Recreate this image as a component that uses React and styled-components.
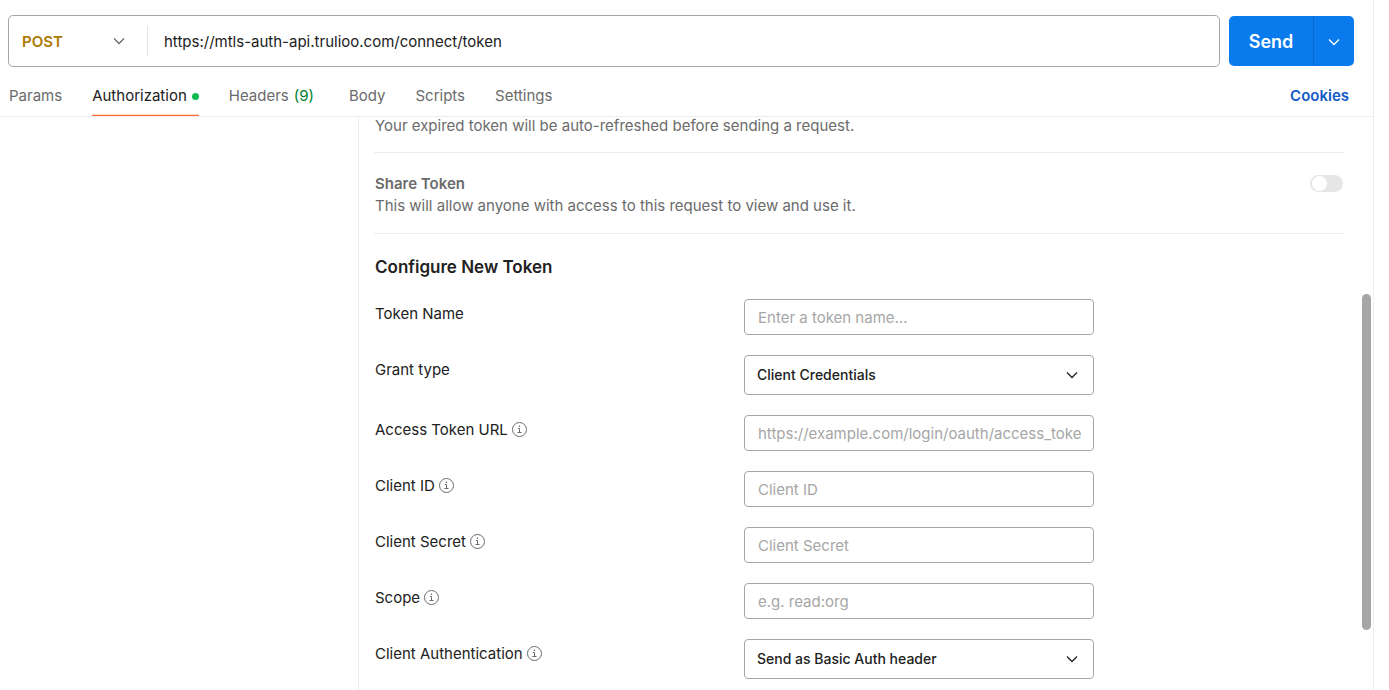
import React from 'react';
import styled, { createGlobalStyle } from 'styled-components';

const GlobalStyle = createGlobalStyle`
  * { box-sizing: border-box; }
  html, body { margin: 0; background: #ffffff; }
  body, button, input, select {
    font-family: Inter, "Liberation Sans", sans-serif;
    font-size: 15px;
    line-height: 22px;
    color: #212121;
  }
  html { overflow: hidden; }
`;

const Page = styled.div`
  display: flex;
  flex-direction: column;
  height: 100vh;
  margin-right: 15px;
  border-right: 1px solid #ededed;
`;

const RequestBar = styled.form`
  display: flex;
  align-items: center;
  gap: 9px;
  padding: 15px 19px 0 8px;
`;

const UrlGroup = styled.div`
  flex: 1;
  display: flex;
  align-items: center;
  height: 52px;
  border: 1px solid #a6a6a6;
  border-radius: 5px;
`;

const SelectWrap = styled.div`
  position: relative;
  width: ${(p) => p.$width};
`;

const SelectIcon = styled.span`
  position: absolute;
  top: 0;
  bottom: 0;
  right: ${(p) => p.$right};
  display: flex;
  align-items: center;
  pointer-events: none;
  color: ${(p) => p.$color};
`;

const MethodSelect = styled.select`
  appearance: none;
  width: 100%;
  height: 30px;
  padding: 1px 13px 0;
  border: 0;
  border-right: 1px solid #e6e6e6;
  background: transparent;
  color: #ad7a03;
  font-weight: 600;
`;

const UrlInput = styled.input`
  flex: 1;
  min-width: 0;
  height: 48px;
  padding: 0 16px;
  border: 0;
  background: transparent;
  outline: 0;
`;

const SendGroup = styled.div`
  display: flex;
  height: 50px;
  border-radius: 5px;
  overflow: hidden;
`;

const SendButton = styled.button`
  display: flex;
  align-items: center;
  justify-content: center;
  width: ${(p) => p.$width};
  padding: 1px 0 0;
  border: 0;
  border-left: ${(p) => (p.$divided ? '1px solid #0a6bd6' : '0')};
  background: #097bed;
  color: #ffffff;
  font-size: 18px;
  font-weight: 600;
`;

const TabBar = styled.nav`
  display: flex;
  align-items: stretch;
  gap: 30px;
  height: 50px;
  padding: 0 24px 0 9px;
  border-bottom: 1px solid #ededed;
`;

const Tab = styled.button`
  display: flex;
  align-items: center;
  padding: 10px 0 0;
  height: 49px;
  border: 0;
  border-bottom: 1px solid ${(p) => (p.$active ? '#ff6c37' : 'transparent')};
  box-shadow: ${(p) => (p.$active ? 'inset 0 -1px #ffd9cc' : 'none')};
  background: transparent;
  color: ${(p) => (p.$active ? '#212121' : '#6b6b6b')};
`;

const ActiveDot = styled.span`
  width: 7px;
  height: 7px;
  margin-left: 5px;
  border-radius: 50%;
  background: #0cbb52;
`;

const Count = styled.span`
  margin: 0 5px;
  color: #007f31;
`;

const CookiesLink = styled.a`
  margin-left: auto;
  padding-top: 18px;
  color: #1259c7;
  font-weight: 600;
  text-decoration: none;
`;

const Body = styled.div`
  position: relative;
  flex: 1;
  min-height: 0;
  display: flex;
  overflow: hidden;
`;

const Sidebar = styled.aside`
  flex: 0 0 359px;
  border-right: 1px solid #ededed;
`;

const Content = styled.main`
  flex: 1;
  min-width: 0;
  padding: 0 29px 0 15px;
`;

const Section = styled.section`
  display: flex;
  justify-content: space-between;
  padding: ${(p) => p.$padding};
  border-bottom: 1px solid #ededed;
  color: #6b6b6b;
`;

const Text = styled.p`
  margin: 0;
  line-height: ${(p) => (p.$tight ? '18px' : '22px')};
`;

const SectionLabel = styled.label`
  display: block;
  font-weight: 600;
`;

const Toggle = styled.input`
  appearance: none;
  width: 33px;
  height: 17px;
  margin: 2px 0 0;
  padding: 1px 2px;
  border-radius: 9px;
  background: #e6e6e6;
  &::before {
    content: '';
    display: block;
    width: 15px;
    height: 15px;
    border-radius: 50%;
    background: #ffffff;
  }
`;

const Form = styled.form`
  display: flex;
  flex-direction: column;
  gap: 20px;
  padding-left: 1px;
`;

const Heading = styled.h2`
  margin: 20px 1px 19px;
  font-size: 17px;
  line-height: 26px;
  font-weight: 600;
`;

const Row = styled.div`
  display: flex;
  align-items: flex-start;
`;

const LabelCell = styled.div`
  display: flex;
  align-items: center;
  gap: 4px;
  flex: 0 0 369px;
  padding-top: 4px;
`;

const TextField = styled.input`
  width: 350px;
  height: 36px;
  padding: 0 12px 0 13px;
  border: 1px solid #a6a6a6;
  border-radius: 4px;
  background: #ffffff;
  &::placeholder { color: #a6a6a6; opacity: 1; }
`;

const SelectField = styled.select`
  appearance: none;
  display: block;
  width: 100%;
  height: 40px;
  padding: 0 12px;
  border: 1px solid #a6a6a6;
  border-radius: 4px;
  background: #ffffff;
  font-size: 14px;
  font-weight: 500;
`;

const ScrollRail = styled.div`
  position: absolute;
  top: 0;
  right: 2px;
  bottom: 0;
  width: 9px;
`;

const ScrollThumb = styled.div`
  height: 336px;
  margin-top: 177px;
  border-radius: 5px;
  background: #a6a6a6;
`;

const Chevron = () => (
  <svg width="12" height="8" viewBox="0 0 12 8" fill="none" stroke="currentColor" strokeWidth="1.3" aria-hidden="true">
    <path d="M1 1.5 6 6.5 11 1.5" />
  </svg>
);

const InfoIcon = () => (
  <svg width="16" height="16" viewBox="0 0 16 16" fill="none" stroke="#6b6b6b" aria-hidden="true">
    <circle cx="7.5" cy="7.5" r="7" />
    <path d="M6 6.5H7.5V10.5M5.5 10.5H9.5" />
    <circle cx="7.5" cy="4.2" r="0.8" fill="#6b6b6b" stroke="none" />
  </svg>
);

const fields = [
  { id: 'token-name', label: 'Token Name', placeholder: 'Enter a token name...' },
  { id: 'grant-type', label: 'Grant type', options: ['Client Credentials'] },
  { id: 'token-url', label: 'Access Token URL', info: true, placeholder: 'https://example.com/login/oauth/access_token' },
  { id: 'client-id', label: 'Client ID', info: true, placeholder: 'Client ID' },
  { id: 'client-secret', label: 'Client Secret', info: true, placeholder: 'Client Secret' },
  { id: 'scope', label: 'Scope', info: true, placeholder: 'e.g. read:org' },
  { id: 'client-auth', label: 'Client Authentication', info: true, options: ['Send as Basic Auth header'] },
];

const Field = ({ id, label, info, placeholder, options }) => (
  <Row>
    <LabelCell>
      <label htmlFor={id}>{label}</label>
      {info && <InfoIcon />}
    </LabelCell>
    {options ? (
      <SelectWrap $width="350px">
        <SelectField id={id}>
          {options.map((o) => <option key={o}>{o}</option>)}
        </SelectField>
        <SelectIcon $right="16px" $color="#212121"><Chevron /></SelectIcon>
      </SelectWrap>
    ) : (
      <TextField id={id} placeholder={placeholder} />
    )}
  </Row>
);

export default function App() {
  return (
    <Page>
      <GlobalStyle />
      <RequestBar onSubmit={(e) => e.preventDefault()}>
        <UrlGroup>
          <SelectWrap $width="139px">
            <MethodSelect aria-label="Method">
              <option>POST</option>
            </MethodSelect>
            <SelectIcon $right="23px" $color="#6b6b6b"><Chevron /></SelectIcon>
          </SelectWrap>
          <UrlInput aria-label="Request URL" defaultValue="https://mtls-auth-api.trulioo.com/connect/token" />
        </UrlGroup>
        <SendGroup>
          <SendButton type="submit" $width="84px">Send</SendButton>
          <SendButton type="button" $width="41px" $divided aria-label="Send options"><Chevron /></SendButton>
        </SendGroup>
      </RequestBar>
      <TabBar>
        <Tab>Params</Tab>
        <Tab $active>Authorization<ActiveDot /></Tab>
        <Tab>Headers<Count>(9)</Count></Tab>
        <Tab>Body</Tab>
        <Tab>Scripts</Tab>
        <Tab>Settings</Tab>
        <CookiesLink href="#cookies">Cookies</CookiesLink>
      </TabBar>
      <Body>
        <Sidebar />
        <Content>
          <Section $padding="0 1px 17px">
            <Text $tight>Your expired token will be auto-refreshed before sending a request.</Text>
          </Section>
          <Section $padding="20px 1px 16px">
            <div>
              <SectionLabel htmlFor="share-token">Share Token</SectionLabel>
              <Text>This will allow anyone with access to this request to view and use it.</Text>
            </div>
            <Toggle type="checkbox" id="share-token" />
          </Section>
          <Heading>Configure New Token</Heading>
          <Form>
            {fields.map((f) => <Field key={f.id} {...f} />)}
          </Form>
        </Content>
        <ScrollRail><ScrollThumb /></ScrollRail>
      </Body>
    </Page>
  );
}
